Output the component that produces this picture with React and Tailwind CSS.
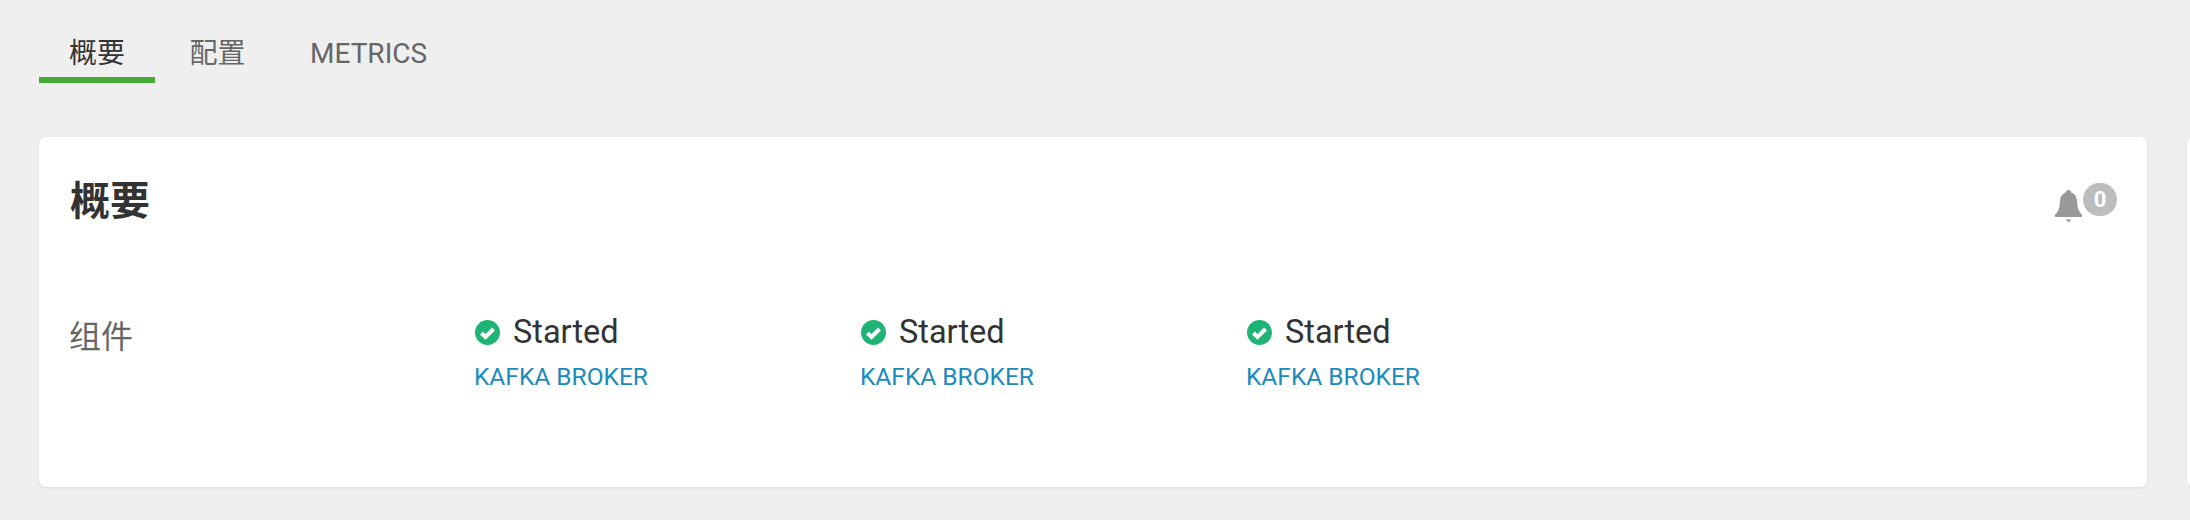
import React from "react";

function Tab({ label, active }) {
    return (
        <div className={`h-[38px] px-[30px] text-[28px] leading-[30px] pt-[15px] border-b-[6px] box-content ${active ? "border-[#45ab33] text-[#333]" : "border-transparent text-[#666]"}`}>
            {label}
        </div>
    );
}

function CheckIcon() {
    return (
        <svg width="25" height="25" viewBox="0 0 25 25">
            <circle cx="12.5" cy="12.5" r="12.5" fill="#1eb475" />
            <path d="M6.5 13 L10.5 17 L18.5 9" fill="none" stroke="#fff" strokeWidth="4" />
        </svg>
    );
}

function BellIcon() {
    return (
        <svg width="29" height="33" viewBox="0 0 28 33" className="mt-[7px]">
            <path d="M14 0C12.4 0 11.4 1 11.2 2.6 7.6 3.8 5.6 7.2 5.4 11.6 5.2 17.6 4 21.4 0.8 24.4 -0.6 25.8 0.4 27 2 27H26C27.6 27 28.6 25.8 27.2 24.4 24 21.4 22.8 17.6 22.6 11.6 22.4 7.2 20.4 3.8 16.8 2.6 16.6 1 15.6 0 14 0Z" fill="#999" />
            <path d="M11 29.5H17L14 32.5Z" fill="#999" />
        </svg>
    );
}

function Component() {
    return (
        <div className="w-[386px]">
            <div className="flex items-center h-[40px] mt-[1px] pl-[1px]">
                <CheckIcon />
                <span className="ml-[13px] text-[32.5px] leading-[40px] text-[#333]">Started</span>
            </div>
            <div className="mt-[10px] text-[24.5px] leading-[30px] text-[#1b8bbc]">KAFKA BROKER</div>
        </div>
    );
}

export default function App() {
    return (
        <div className="w-[2190px] h-[520px] overflow-hidden bg-[#efefef] font-['Roboto','Noto_Sans_CJK_SC',sans-serif]">
            <div className="flex gap-[4.5px] pl-[39px] pt-[24px]">
                <Tab label="概要" active />
                <Tab label="配置" />
                <Tab label="METRICS" />
            </div>
            <div className="flex gap-[40px] mt-[54px]">
                <div className="ml-[39px] w-[2108px] h-[350px] shrink-0 bg-white rounded-[7px] shadow-[0_1px_3px_rgba(0,0,0,0.1)] px-[31px] pt-[39px] relative">
                    <h2 className="text-[40px] leading-[52px] font-bold text-[#333]">概要</h2>
                    <div className="absolute top-[46px] right-[30px] flex">
                        <BellIcon />
                        <span className="w-[34px] h-[33px] rounded-full bg-[#bdbdbd] text-white font-bold text-[22px] leading-[33px] text-center">0</span>
                    </div>
                    <div className="flex mt-[83px]">
                        <div className="w-[405px] -ml-[1px] text-[32px] leading-[46px] text-[#666] mt-[3px]">组件</div>
                        <Component />
                        <Component />
                        <Component />
                    </div>
                </div>
                <div className="w-[400px] h-[350px] shrink-0 bg-white rounded-[7px] shadow-[0_1px_3px_rgba(0,0,0,0.1)]"></div>
            </div>
        </div>
    );
}
